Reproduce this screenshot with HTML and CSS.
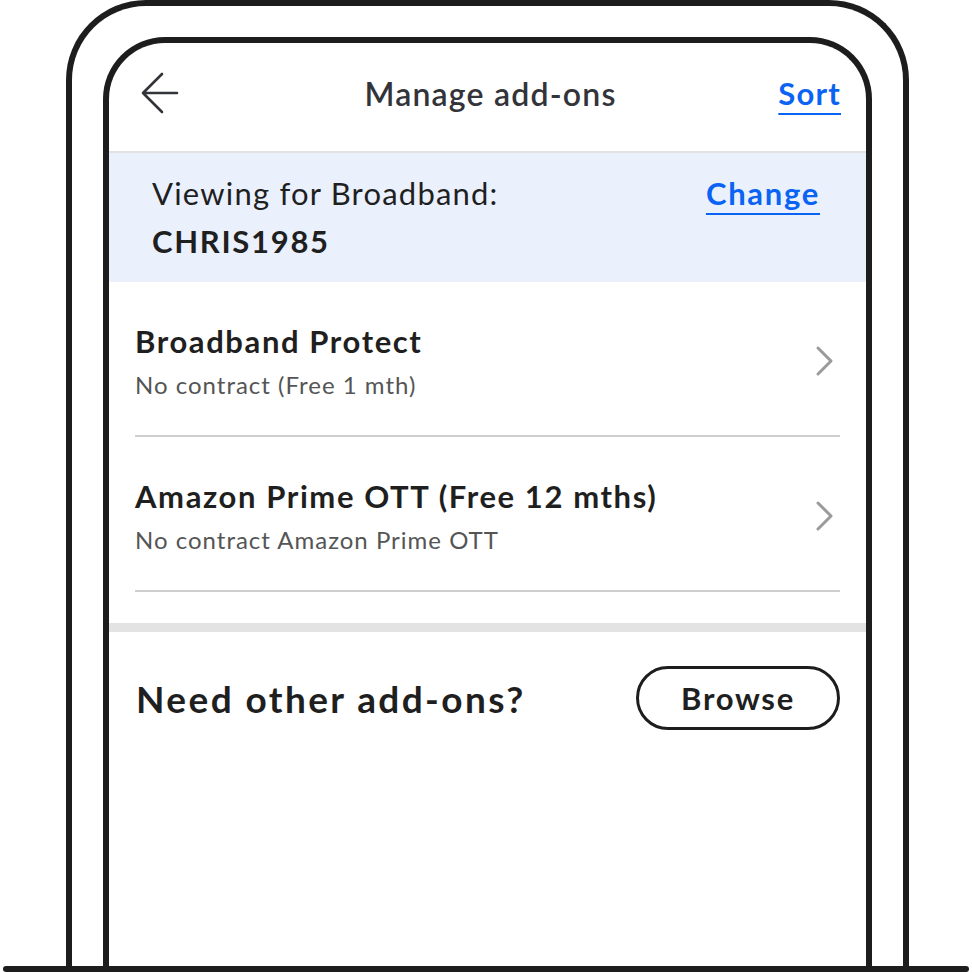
FILE: index.html
```html
<!DOCTYPE html>
<html lang="en">
<head>
    <meta charset="UTF-8">
    <meta name="viewport" content="width=device-width, initial-scale=1.0">
    <title>Manage add-ons</title>
    <link rel="stylesheet" href="styles.css">
</head>
<body>

<div class="scene">
    <div class="device">
        <div class="screen">
            <header class="topbar">
                <button class="back" aria-label="Back">
                    <svg width="40" height="44" viewBox="0 0 40 44">
                        <path d="M22 3 L3 22 L22 41 M3 22 H37" fill="none" stroke="#33343a" stroke-width="2.6" stroke-linecap="round" stroke-linejoin="round"/>
                    </svg>
                </button>
                <h1>Manage add-ons</h1>
                <a class="link sort" href="#">Sort</a>
            </header>

            <section class="account">
                <div class="account-text">
                    <p>Viewing for Broadband:</p>
                    <p class="account-id">CHRIS1985</p>
                </div>
                <a class="link change" href="#">Change</a>
            </section>

            <ul class="addons">
                <li class="addon">
                    <div>
                        <h2>Broadband Protect</h2>
                        <p>No contract (Free 1 mth)</p>
                    </div>
                    <svg class="chevron" width="20" height="32" viewBox="0 0 20 32">
                        <path d="M3 3 L16 16 L3 29" fill="none" stroke="#9b9b9b" stroke-width="3" stroke-linecap="round" stroke-linejoin="round"/>
                    </svg>
                </li>
                <li class="addon">
                    <div>
                        <h2>Amazon Prime OTT (Free 12 mths)</h2>
                        <p>No contract Amazon Prime OTT</p>
                    </div>
                    <svg class="chevron" width="20" height="32" viewBox="0 0 20 32">
                        <path d="M3 3 L16 16 L3 29" fill="none" stroke="#9b9b9b" stroke-width="3" stroke-linecap="round" stroke-linejoin="round"/>
                    </svg>
                </li>
            </ul>

            <section class="more">
                <h3>Need other add-ons?</h3>
                <button class="browse">Browse</button>
            </section>
        </div>
    </div>
    <div class="ground"></div>
</div>

</body>
</html>
```

FILE: styles.css
```css
body {
    margin: 0;
    background: #ffffff;
    font-family: Lato, "Open Sans", sans-serif;
    color: #1f1f1f;
}

.scene {
    width: 972px;
    height: 972px;
}

/* phone outline */
.device {
    height: 966px;
    margin: 0 63px 0 66px;
    padding: 31px 31px 0;
    border: 6px solid #1d1d1d;
    border-bottom: none;
    border-radius: 80px 80px 0 0;
    box-sizing: border-box;
}

.screen {
    height: 100%;
    border: 6px solid #1d1d1d;
    border-bottom: none;
    border-radius: 62px 62px 0 0;
    box-sizing: border-box;
    overflow: hidden;
}

.ground {
    height: 6px;
    margin: 0 3px;
    background: #1d1d1d;
    border-radius: 3px;
}

/* header */
.topbar {
    display: grid;
    grid-template-columns: 1fr auto 1fr;
    align-items: center;
    height: 110px;
    padding: 0 25px 8px 31px;
    box-sizing: border-box;
    border-bottom: 2px solid #e2e2e2;
}

.back {
    justify-self: start;
    display: flex;
    padding: 0;
    border: none;
    background: none;
}

.topbar h1 {
    margin: 0;
    font-size: 32px;
    font-weight: 600;
    letter-spacing: 1.2px;
    color: #33343a;
}

.link {
    color: #0b63f3;
    font-weight: 700;
    text-decoration: underline;
    text-decoration-thickness: 2px;
    text-underline-offset: 8px;
}

.sort {
    justify-self: end;
    font-size: 31px;
    letter-spacing: 1.2px;
}

/* account banner */
.account {
    display: flex;
    justify-content: space-between;
    align-items: flex-start;
    padding: 16px 46px 17px 43px;
    background: #eaf1fd;
}

.account p {
    margin: 0;
    font-size: 31px;
    line-height: 48px;
    letter-spacing: 1.2px;
}

.account .account-id {
    font-weight: 700;
    letter-spacing: 1.7px;
}

.change {
    font-size: 31px;
    line-height: 48px;
    letter-spacing: 1.7px;
}

/* add-on list */
.addons {
    list-style: none;
    margin: 0;
    padding: 0 26px 31px;
}

.addon {
    display: flex;
    justify-content: space-between;
    align-items: center;
    padding: 39px 0 35px;
    border-bottom: 2px solid #cfcfcf;
}

.addon h2 {
    margin: 0;
    font-size: 31px;
    line-height: 40px;
    font-weight: 700;
    letter-spacing: 1.6px;
}

.addon p {
    margin: 9px 0 0;
    font-size: 24px;
    line-height: 30px;
    letter-spacing: 1px;
    color: #555555;
}

.chevron {
    margin-right: 5px;
}

/* browse */
.more {
    display: flex;
    justify-content: space-between;
    align-items: center;
    padding: 34px 26px 0 27px;
    border-top: 9px solid #e3e3e3;
}

.more h3 {
    margin: 0;
    font-size: 37px;
    font-weight: 700;
    letter-spacing: 2.4px;
}

.browse {
    width: 204px;
    height: 64px;
    border: 3px solid #1d1d1d;
    border-radius: 32px;
    background: #ffffff;
    font-family: inherit;
    font-size: 31px;
    font-weight: 700;
    letter-spacing: 1.7px;
    color: #1f1f1f;
}
```
